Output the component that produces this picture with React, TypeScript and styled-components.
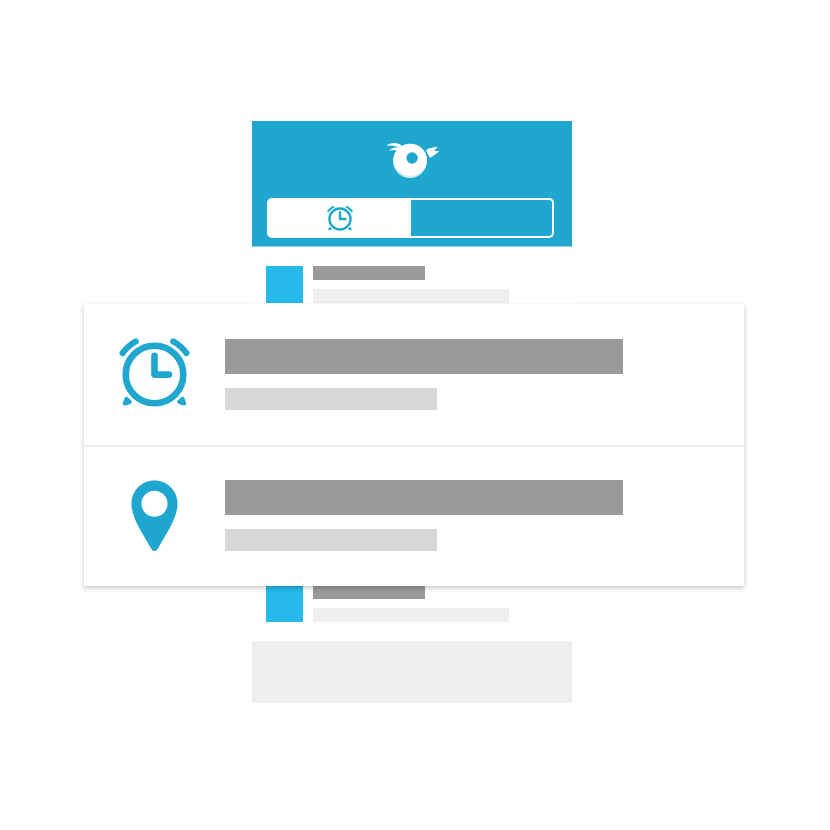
import React from "react";
import styled, { createGlobalStyle } from "styled-components";

const blue = "#20a7d0";

const GlobalStyle = createGlobalStyle`
  *, *::before, *::after { box-sizing: border-box; }
  body {
    margin: 0;
    background: #fefefe;
    font-family: "Liberation Sans", Arial, sans-serif;
  }
`;

const Stage = styled.main`
  display: grid;
  justify-items: center;
  align-items: start;
  padding: 121px 24px;
`;

const Phone = styled.section`
  grid-area: 1 / 1;
  width: 100%;
  max-width: 320px;
  margin-right: 6px;
  background: #fff;
`;

const Header = styled.header`
  display: flex;
  flex-direction: column;
  align-items: center;
  padding: 21px 18px 8px 15px;
  background: ${blue};
  border-bottom: 1px solid #8ed2e7;
`;

const LogoMark = styled.svg`
  width: 54px;
  height: 38px;
  margin: 0 0 18px 6px;
`;

const Segments = styled.div`
  display: flex;
  width: 100%;
  height: 40px;
  border: 2px solid #fff;
  border-radius: 5px;
  background: #fff;
`;

const Segment = styled.button<{ $selected?: boolean }>`
  flex: 1;
  display: flex;
  align-items: center;
  justify-content: center;
  padding: 2px 0 0;
  border: 0;
  background: ${(p) => (p.$selected ? "#fff" : blue)};
  border-radius: ${(p) => (p.$selected ? "3px 0 0 3px" : "0 3px 3px 0")};
`;

const List = styled.ul`
  display: flex;
  flex-direction: column;
  justify-content: space-between;
  min-height: 394px;
  margin: 0;
  padding: 19px 14px;
  list-style: none;
`;

const ListItem = styled.li`
  display: flex;
  gap: 10px;
`;

const Thumb = styled.div`
  width: 37px;
  background: #25baeb;
`;

const Lines = styled.div<{ $gap: number }>`
  flex: 1;
  display: flex;
  flex-direction: column;
  gap: ${(p) => p.$gap}px;
`;

const Bar = styled.div<{ $width: number; $height: number; $tone: string }>`
  width: 100%;
  max-width: ${(p) => p.$width}px;
  height: ${(p) => p.$height}px;
  background: ${(p) => p.$tone};
`;

const Footer = styled.footer`
  height: 62px;
  background: #efefef;
`;

const Card = styled.section`
  grid-area: 1 / 1;
  z-index: 1;
  width: 100%;
  max-width: 660px;
  margin: 183px 2px 0 0;
  background: #fff;
  box-shadow: 0 2px 5px rgba(0, 0, 0, 0.22);
`;

const CardRow = styled.div`
  display: flex;
  align-items: center;
  padding: 35px;
  & + & {
    padding-top: 33px;
    border-top: 2px solid #efefef;
  }
`;

const IconSlot = styled.div`
  display: flex;
  justify-content: center;
  width: 71px;
  margin-right: 35px;
`;

const Icon = styled.svg<{ $width: number; $height: number }>`
  display: block;
  width: ${(p) => p.$width}px;
  height: ${(p) => p.$height}px;
  overflow: visible;
`;

function AlarmClock({ size }: { size: number }) {
  return (
    <Icon $width={size} $height={size} viewBox="0 0 71 71" fill="none" stroke={blue} strokeWidth="6.6" strokeLinecap="round" strokeLinejoin="round" aria-hidden="true">
      <circle cx="35.5" cy="35.5" r="28.8" />
      <path d="M35.5 16.8V35.6H50" />
      <path d="M3.6 14.1Q9.2 6.6 16.7 2.4M67.4 14.1Q61.8 6.6 54.3 2.4" strokeWidth="6.2" />
      <path d="M5.6 64.6L7.4 59.6L11 62.8Q9.2 64.4 5.6 64.6ZM65.4 64.6L63.6 59.6L60 62.8Q61.8 64.4 65.4 64.6Z" fill={blue} strokeWidth="3.8" />
    </Icon>
  );
}

function MapPin() {
  return (
    <Icon $width={47} $height={71} viewBox="0 0 47 71" aria-hidden="true">
      <path
        fill={blue}
        fillRule="evenodd"
        d="M23.5.4C10.5.4.4 10.6.4 23.7C.4 38.5 12.5 54.5 20.2 68.8Q21.5 71 23.5 71Q25.5 71 26.8 68.8C34.5 54.5 46.6 38.5 46.6 23.7C46.6 10.6 36.5.4 23.5.4ZM23.5 10.7A13 13 0 1 1 23.5 36.7A13 13 0 1 1 23.5 10.7Z"
      />
    </Icon>
  );
}

function BirdLogo() {
  return (
    <LogoMark viewBox="0 0 54 38" aria-hidden="true">
      <circle cx="23" cy="19" r="17" fill="#d3edf6" />
      <ellipse cx="23.3" cy="17.8" rx="16.6" ry="16" fill="#fff" />
      <circle cx="25.1" cy="16" r="5.7" fill={blue} />
      <path fill="#fff" d="M-1 3.8Q3.4.6 8.4 1Q12.8 1.4 15.4 4.2L13 6.4Q7.6 2.6-1 3.8Z" />
      <path fill="#fff" d="M2 9.2Q5.6 4.8 11.4 5.4L15 6.4L11.6 9.6Q7.6 6.8 2 9.2Z" />
      <path fill="#fff" d="M39.2 8.6Q39.6 6.8 42 6.4L50.6 4.4L47.4 8.8L52.4 9.2L43.6 15.8Q42.8 15.6 42.4 14.6Q40.2 11.6 39.2 8.6Z" />
    </LogoMark>
  );
}

export default function App() {
  return (
    <>
      <GlobalStyle />
      <Stage>
        <Phone>
          <Header>
            <BirdLogo />
            <Segments>
              <Segment type="button" aria-label="Alarms" aria-pressed="true" $selected>
                <AlarmClock size={26} />
              </Segment>
              <Segment type="button" aria-label="Places" aria-pressed="false" />
            </Segments>
          </Header>
          <List>
            {[0, 1, 2, 3, 4].map((item) => (
              <ListItem key={item}>
                <Thumb />
                <Lines $gap={9}>
                  <Bar $width={112} $height={14} $tone="#9a9a9a" />
                  <Bar $width={196} $height={14} $tone="#efefef" />
                </Lines>
              </ListItem>
            ))}
          </List>
          <Footer />
        </Phone>
        <Card>
          {[<AlarmClock key="alarm" size={71} />, <MapPin key="pin" />].map((icon) => (
            <CardRow key={icon.key}>
              <IconSlot>{icon}</IconSlot>
              <Lines $gap={14}>
                <Bar $width={398} $height={35} $tone="#9a9a9a" />
                <Bar $width={212} $height={22} $tone="#d7d7d7" />
              </Lines>
            </CardRow>
          ))}
        </Card>
      </Stage>
    </>
  );
}
